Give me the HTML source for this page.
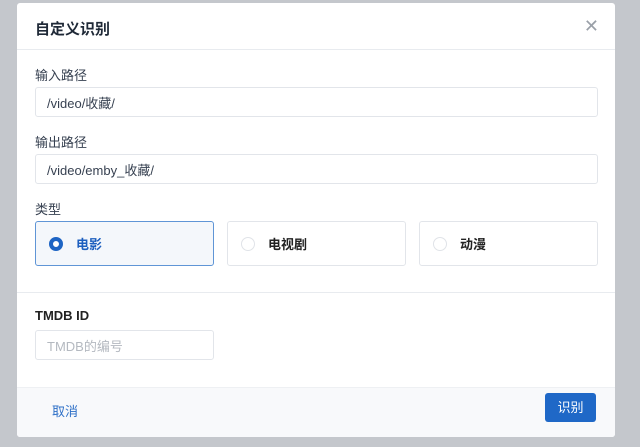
<!DOCTYPE html>
<html><head><meta charset="utf-8"><style>
*{box-sizing:border-box;margin:0;padding:0}
body{width:640px;height:447px;background:#c4c7cc;font-family:"Liberation Sans","Noto Sans CJK SC",sans-serif;position:relative;overflow:hidden;color:#1f2937}
.modal{position:absolute;left:17px;top:3px;width:598px;height:434px;background:#fff;border-radius:3px;overflow:hidden}
.hdr{height:47px;border-bottom:1px solid #e8ebef;position:relative}
.hdr h1{position:absolute;left:18px;top:15px;font-size:15px;font-weight:bold;color:#1f2937}
.x{position:absolute;right:16px;top:13px;font-size:18px;color:#9aa0a8}
.lbl{position:absolute;left:18px;font-size:13px;color:#374151}
.inp{position:absolute;left:18px;width:563px;height:30px;border:1px solid #e2e5ea;border-radius:3px;font-size:13px;padding:5px 11px;color:#374151}
.card{position:absolute;top:218px;width:179px;height:45px;border:1px solid #e2e5ea;border-radius:3px}
.card .r{position:absolute;left:13px;top:15px;width:14px;height:14px;border:1px solid #e0e3e8;border-radius:50%}
.card span{position:absolute;left:40px;top:12px;font-size:13px;font-weight:bold;color:#222}
.card.on{border-color:#5f95d6;background:#f4f7fb}
.card.on .r{border:4px solid #1d64c4;background:#fff}
.card.on span{color:#1d5fbf}
.div{position:absolute;left:0;right:0;top:289px;border-top:1px solid #e8ebef}
.ftr{position:absolute;left:0;right:0;top:384px;bottom:0;background:#f8f9fb;border-top:1px solid #eef0f3}
</style></head><body>
<div class="modal">
<div class="hdr"><h1>自定义识别</h1><div class="x">✕</div></div>
<div class="lbl" style="top:62px">输入路径</div>
<div class="inp" style="top:84px">/video/收藏/</div>
<div class="lbl" style="top:129px">输出路径</div>
<div class="inp" style="top:151px">/video/emby_收藏/</div>
<div class="lbl" style="top:196px">类型</div>
<div class="card on" style="left:18px"><div class="r"></div><span>电影</span></div>
<div class="card" style="left:210px"><div class="r"></div><span>电视剧</span></div>
<div class="card" style="left:402px"><div class="r"></div><span>动漫</span></div>
<div class="div"></div>
<div class="lbl" style="top:305px;font-weight:bold;color:#222">TMDB ID</div>
<div class="inp" style="top:327px;width:179px;color:#b4b9c0">TMDB的编号</div>
<div class="ftr">
<div style="position:absolute;left:35px;top:13px;font-size:13px;color:#2d6fc7">取消</div>
<div style="position:absolute;left:528px;top:5px;width:51px;height:29px;background:#1f68c7;border-radius:3px;color:#fff;font-size:13px;text-align:center;line-height:29px">识别</div>
</div>
</div>
</body></html>
